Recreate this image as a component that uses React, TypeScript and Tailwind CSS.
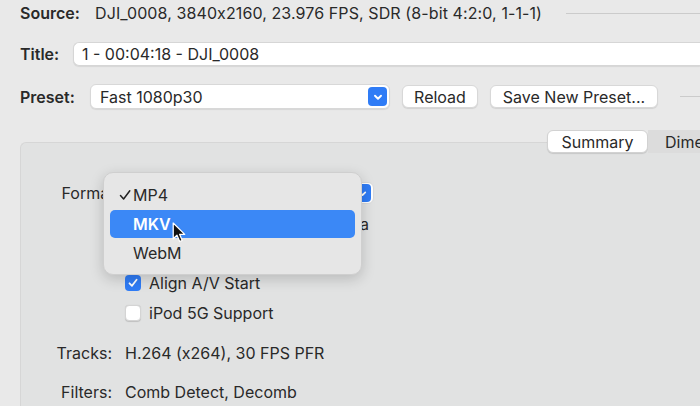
import React from "react";

const font = { fontFamily: "Inter, 'Liberation Sans', sans-serif" };

function Chevron({ className = "" }: { className?: string }) {
  return (
    <svg viewBox="0 0 10 10" className={className}>
      <path d="M2.5 4 L5 6.5 L7.5 4" fill="none" stroke="white" strokeWidth="1.6" strokeLinecap="round" strokeLinejoin="round" />
    </svg>
  );
}

function Checkbox({ checked }: { checked?: boolean }) {
  return checked ? (
    <div className="w-[16px] h-[16px] shrink-0 rounded-[4px] bg-[#2f7cf6] flex items-center justify-center">
      <svg viewBox="0 0 12 12" className="w-[12px] h-[12px]">
        <path d="M2.5 6.3 L5 8.8 L9.6 2.8" fill="none" stroke="white" strokeWidth="1.8" strokeLinecap="round" strokeLinejoin="round" />
      </svg>
    </div>
  ) : (
    <div className="w-[16px] h-[16px] shrink-0 rounded-[4px] bg-white border border-[#d4d4d4] shadow-[0_0.5px_1px_rgba(0,0,0,0.15)]" />
  );
}

function Cursor() {
  return (
    <svg viewBox="0 0 14 21" className="absolute left-[151px] top-[79px] w-[15px] h-[22px]">
      <path d="M1 1 L1 16 L4.6 12.6 L7.2 18.6 L9.6 17.6 L7.1 11.8 L12 11.8 Z" fill="#111" stroke="white" strokeWidth="1.2" strokeLinejoin="round" />
    </svg>
  );
}

export default function App() {
  return (
    <div className="w-[700px] h-[406px] overflow-hidden bg-[#e9e9e9] text-[#292929] text-[16px]" style={font}>
      <div className="flex flex-col">
        {/* source */}
        <div className="h-[26px] flex items-center pl-[20px] whitespace-nowrap">
          <span className="font-semibold w-[75px] shrink-0">Source:</span>
          <span className="tracking-[0.1px]">DJI_0008, 3840x2160, 23.976 FPS, SDR (8-bit 4:2:0, 1-1-1)</span>
          <div className="flex-1 ml-[24px] h-px bg-[#cbcbcb]" />
        </div>

        {/* title */}
        <div className="mt-[16px] h-[24px] flex items-center pl-[20px]">
          <span className="font-semibold w-[53px] shrink-0">Title:</span>
          <div className="flex-1 h-full bg-white rounded-l-[6px] border border-r-0 border-[#d6d6d6] flex items-center pl-[8px] shadow-[0_1px_1px_rgba(0,0,0,0.08)]">
            1 - 00:04:18 - DJI_0008
          </div>
        </div>

        {/* preset */}
        <div className="mt-[18px] h-[25px] flex items-center pl-[20px] whitespace-nowrap">
          <span className="font-semibold w-[70px] shrink-0">Preset:</span>
          <div className="w-[300px] shrink-0 h-full bg-white rounded-[6px] border border-[#d8d8d8] flex items-center pl-[9px] pr-[2px] shadow-[0_1px_1px_rgba(0,0,0,0.08)]">
            <span className="flex-1">Fast 1080p30</span>
            <div className="w-[19px] h-[19px] rounded-[4px] bg-[#2f7cf6] flex items-center justify-center">
              <Chevron className="w-[12px] h-[12px]" />
            </div>
          </div>
          <div className="ml-[12px] w-[76px] shrink-0 h-[23px] bg-white rounded-[6px] border border-[#d8d8d8] flex items-center justify-center shadow-[0_1px_1px_rgba(0,0,0,0.1)]">
            Reload
          </div>
          <div className="ml-[12px] w-[168px] shrink-0 h-[23px] bg-white rounded-[6px] border border-[#d8d8d8] flex items-center justify-center shadow-[0_1px_1px_rgba(0,0,0,0.1)]">
            Save New Preset...
          </div>
          <div className="flex-1 ml-[22px] h-px bg-[#cbcbcb]" />
        </div>

        {/* tabs */}
        <div className="relative z-10 mt-[21px] h-[23px] flex pl-[547px] whitespace-nowrap">
          <div className="w-[101px] shrink-0 h-full bg-white rounded-[6px] border border-[#d2d2d2] flex items-center justify-center shadow-[0_1px_1px_rgba(0,0,0,0.12)]">
            Summary
          </div>
          <div className="flex-1 min-w-0 overflow-hidden h-full bg-[#dcdcdc] flex items-center pl-[17px]">Dimensions</div>
        </div>

        {/* summary box */}
        <div className="relative -mt-[11px] ml-[20px] h-[270px] bg-[#e1e2e2] border-t border-l border-[#d6d6d6] rounded-tl-[6px]">
          <div className="pt-[38px] flex flex-col whitespace-nowrap">
            <div className="h-[24px] flex items-center">
              <span className="w-[104px] text-right pr-[6px]">Format:</span>
              <div className="w-[249px] h-[22px] bg-white rounded-[6px] border border-[#d8d8d8] flex items-center justify-end pr-[2px]">
                <div className="w-[17px] h-[18px] rounded-[4px] bg-[#2f7cf6] flex items-center justify-center">
                  <Chevron className="w-[11px] h-[11px]" />
                </div>
              </div>
            </div>
            <div className="mt-[11px] flex flex-col gap-[13.5px] pl-[104px]">
              <div className="h-[16px] flex items-center gap-[8px]">
                <Checkbox checked />
                <span className="w-[220px] text-right">Passthru Common Metadata</span>
              </div>
              <div className="h-[16px] flex items-center gap-[8px]">
                <Checkbox checked />
                <span>Web Optimized</span>
              </div>
              <div className="h-[16px] flex items-center gap-[8px]">
                <Checkbox checked />
                <span>Align A/V Start</span>
              </div>
              <div className="h-[16px] flex items-center gap-[8px]">
                <Checkbox />
                <span>iPod 5G Support</span>
              </div>
            </div>
            <div className="mt-[21px] h-[22px] flex items-center">
              <span className="w-[91px] text-right">Tracks:</span>
              <span className="ml-[13px]">H.264 (x264), 30 FPS PFR</span>
            </div>
            <div className="mt-[17px] h-[22px] flex items-center">
              <span className="w-[91px] text-right">Filters:</span>
              <span className="ml-[13px]">Comb Detect, Decomb</span>
            </div>
          </div>

          {/* format popup menu */}
          <div className="absolute left-[82px] top-[29px] w-[259px] h-[103px] bg-[#e6e6e6] rounded-[10px] border border-[#cfcfcf] shadow-[0_4px_14px_rgba(0,0,0,0.18)] flex flex-col px-[6px] pt-[6px]">
            <div className="h-[31px] flex items-center">
              <div className="w-[23px] flex justify-end pr-[2px]">
                <svg viewBox="0 0 12 12" className="w-[12px] h-[12px]">
                  <path d="M1.5 6.5 L4.6 10 L10.8 1.8" fill="none" stroke="#222" strokeWidth="1.5" strokeLinecap="round" strokeLinejoin="round" />
                </svg>
              </div>
              <span>MP4</span>
            </div>
            <div className="h-[28px] flex items-center bg-[#3b88f6] rounded-[5px] text-white font-semibold pl-[23px]">
              MKV
            </div>
            <div className="h-[30px] flex items-center pl-[23px]">WebM</div>
          </div>
          <Cursor />
        </div>
      </div>
    </div>
  );
}
